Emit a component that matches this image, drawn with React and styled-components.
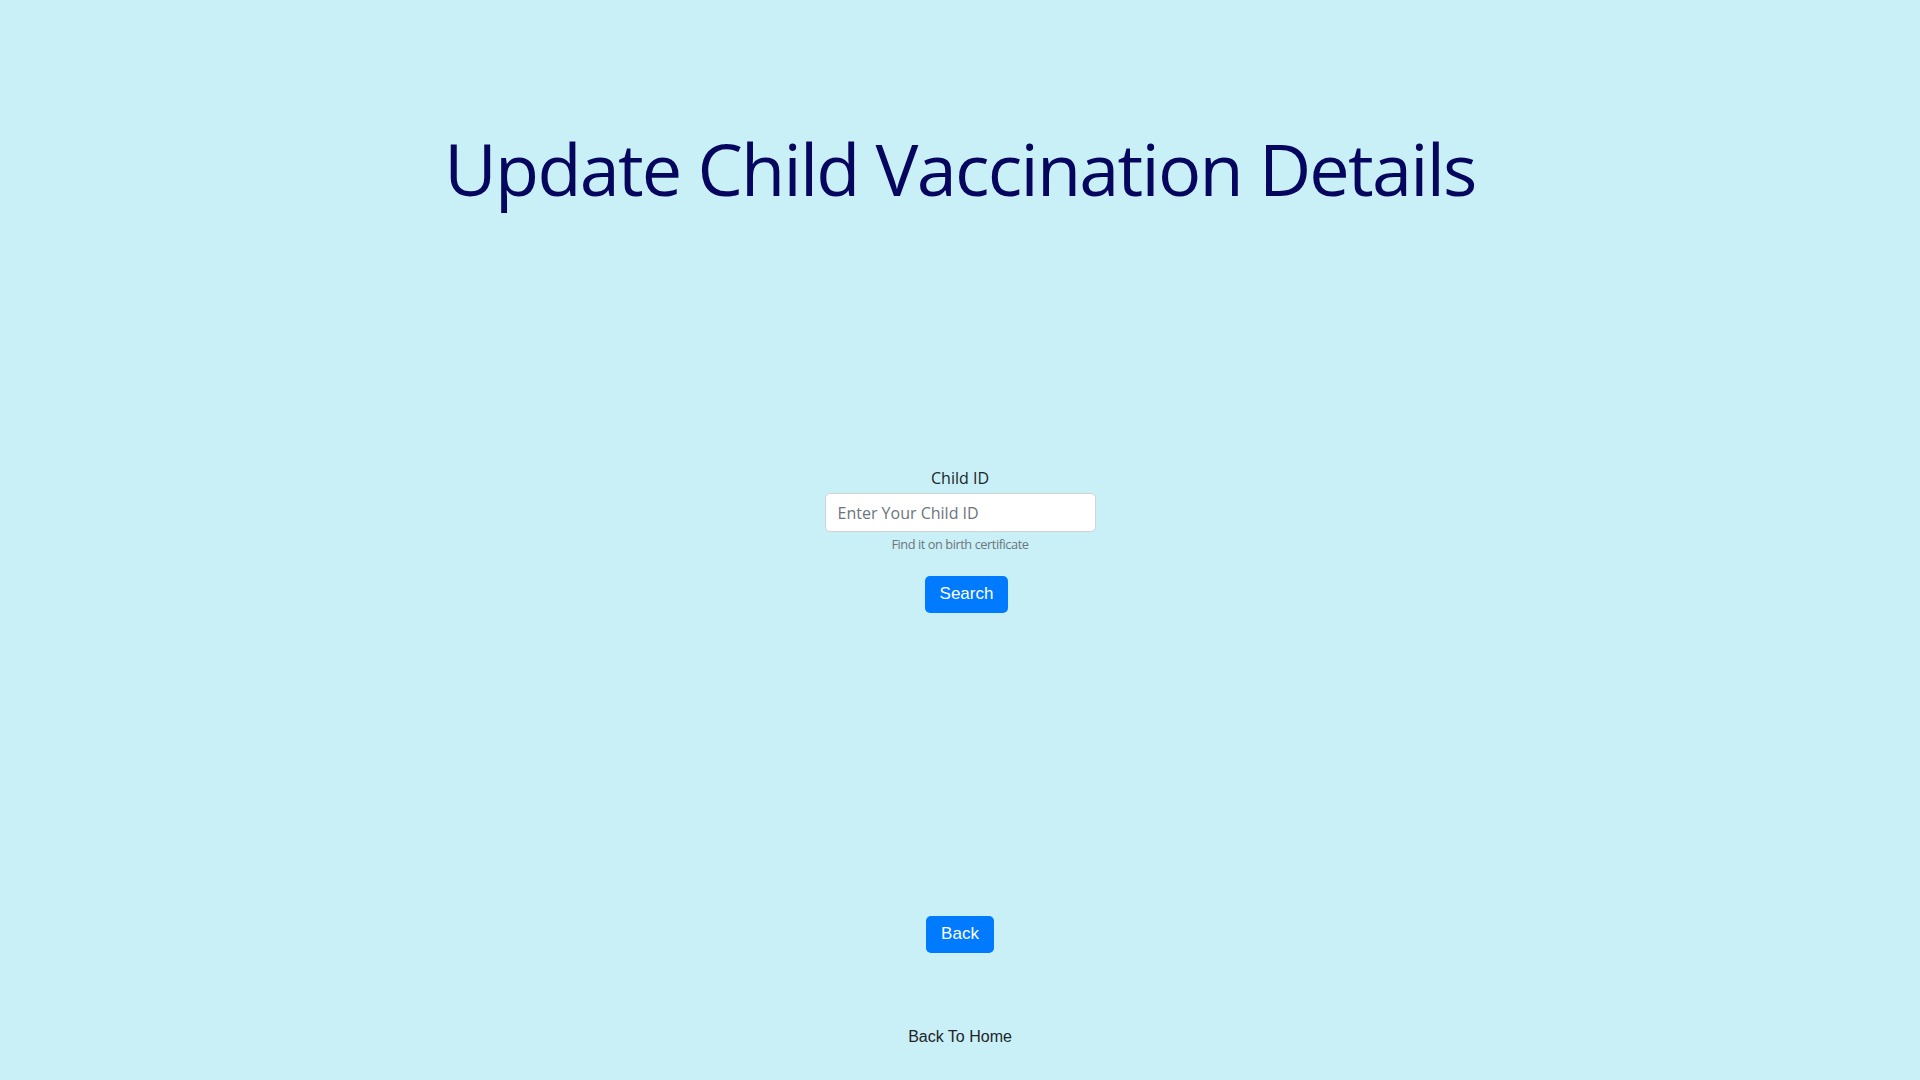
import React from "react";
import styled, { createGlobalStyle } from "styled-components";

const GlobalStyle = createGlobalStyle`
  html, body {
    margin: 0;
    padding: 0;
    background: #c9f0f7;
  }
  body {
    font-family: "Open Sans", "Noto Sans", sans-serif;
    color: #212529;
  }
  * { box-sizing: border-box; }
`;

const Page = styled.div`
  min-height: 100vh;
  display: flex;
  flex-direction: column;
  align-items: center;
  padding-top: 125px;
`;

const Title = styled.h1`
  margin: 0;
  font-family: "Open Sans", "Noto Sans", sans-serif;
  font-weight: 400;
  font-size: 72px;
  line-height: 1.2;
  color: #06065e;
  letter-spacing: -1.75px;
  text-align: center;
`;

const Form = styled.form`
  margin-top: 255px;
  display: flex;
  flex-direction: column;
  align-items: center;
`;

const Label = styled.label`
  font-size: 16px;
  line-height: 24px;
  color: #212529;
  margin-bottom: 3px;
`;

const Input = styled.input`
  width: 271px;
  height: 39px;
  padding: 0 12px;
  border: 1px solid #ced4da;
  border-radius: 5px;
  background: #fff;
  font-family: "Open Sans", "Noto Sans", sans-serif;
  font-size: 16px;
  color: #495057;
  outline: none;
  &::placeholder {
    color: #6c757d;
  }
`;

const Hint = styled.small`
  margin-top: 3px;
  font-size: 12.8px;
  line-height: 19.2px;
  letter-spacing: -0.45px;
  color: #6c757d;
`;

const Button = styled.button`
  margin-top: ${(p) => p.$top}px;
  margin-left: ${(p) => p.$shift || 0}px;
  height: 37px;
  padding: 0 15px;
  border: none;
  border-radius: 5px;
  background: #007bff;
  color: #fff;
  font-family: "Liberation Sans", Arial, sans-serif;
  font-size: 17px;
  cursor: pointer;
`;

const HomeLink = styled.a`
  margin-top: 72px;
  font-family: "Liberation Sans", Arial, sans-serif;
  font-size: 16px;
  line-height: 24px;
  color: #212529;
  text-decoration: none;
  cursor: pointer;
`;

export default function App() {
  return (
    <>
      <GlobalStyle />
      <Page>
        <Title>Update Child Vaccination Details</Title>
        <Form onSubmit={(e) => e.preventDefault()}>
          <Label htmlFor="childId">Child ID</Label>
          <Input id="childId" type="text" placeholder="Enter Your Child ID" />
          <Hint>Find it on birth certificate</Hint>
          <Button type="submit" $top={21} $shift={13}>
            Search
          </Button>
        </Form>
        <Button type="button" $top={303}>
          Back
        </Button>
        <HomeLink>Back To Home</HomeLink>
      </Page>
    </>
  );
}
